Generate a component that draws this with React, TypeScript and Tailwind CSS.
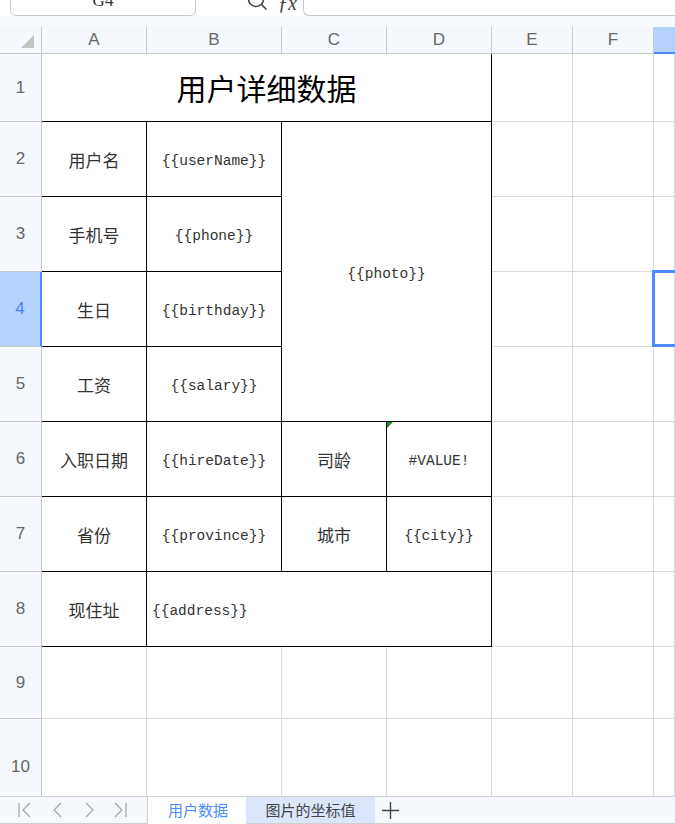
import React from "react";

const colLetters = ["A", "B", "C", "D", "E", "F", "G"];

const gridCell = "border-r border-b border-[#dadada] bg-white";
const tableCell =
  "border-r border-b border-black bg-white flex items-center justify-center";
const label = "font-['Noto_Sans_CJK_SC',sans-serif] text-[17px] text-[#333] mt-[2px]";
const code = "font-['Liberation_Mono',monospace] text-[14.5px] text-[#333] mt-[6px]";

function RowHead({ n, active }: { n: number; active?: boolean }) {
  if (active) {
    return (
      <div className="flex items-center justify-center bg-[#b4d2fd] border-b border-b-[#c9c9c9] border-r-2 border-r-[#4a8cf7] font-['Liberation_Sans',sans-serif] text-[17px] text-[#4a86ee]">
        {n}
      </div>
    );
  }
  return (
    <div className="flex items-center justify-center bg-[#f5f9fe] border-r border-b border-[#c9c9c9] font-['Liberation_Sans',sans-serif] text-[17px] text-[#666]">
      {n}
    </div>
  );
}

function Blank({ selected }: { selected?: boolean }) {
  return (
    <div className={`${gridCell} relative`}>
      {selected && (
        <div className="absolute -left-[2px] -top-[2px] -bottom-[1px] -right-[40px] border-[3px] border-[#4c8dfc]" />
      )}
    </div>
  );
}

function Tail({ row }: { row: number }) {
  return (
    <>
      <Blank />
      <Blank />
      <Blank selected={row === 4} />
    </>
  );
}

export default function App() {
  return (
    <div className="w-[675px] h-[824px] overflow-hidden flex flex-col bg-[#f7fbff]">
      {/* formula bar, mostly scrolled off the top */}
      <div className="h-[16px] flex items-end relative overflow-hidden bg-white">
        <div className="ml-[10px] w-[186px] h-[34px] bg-white border border-[#c8c8c8] rounded-b-md flex items-center justify-center relative">
          <span className="font-['Liberation_Serif',serif] text-[17px] leading-none text-[#333] mt-[2px]">
            G4
          </span>
          <span className="absolute right-[5px] top-[12px] w-0 h-0 border-l-[4px] border-r-[4px] border-t-[5px] border-l-transparent border-r-transparent border-t-[#999]" />
        </div>
        <svg
          className="ml-[50px] mb-[4px]"
          width="24"
          height="24"
          viewBox="0 0 24 24"
          fill="none"
          stroke="#444"
          strokeWidth="1.6"
        >
          <circle cx="10" cy="11" r="7.5" />
          <path d="M6.5 11h7M15.5 16.5l5 5" />
        </svg>
        <span className="ml-[8px] mb-[3px] font-['Liberation_Serif',serif] italic text-[20px] leading-none text-[#444]">
          ƒx
        </span>
        <div className="ml-[6px] flex-1 h-[34px] bg-white border border-[#c8c8c8] border-r-0 rounded-bl-md" />
      </div>
      <div className="h-[11px] bg-[#f7fbff]" />

      {/* sheet */}
      <div className="flex-1 overflow-hidden">
        <div className="grid grid-cols-[42px_105px_135px_105px_105px_81px_81px_1fr] grid-rows-[27px_68px_75px_75px_75px_75px_75px_75px_75px_72px_97px]">
          {/* column header */}
          <div className="relative bg-[#f5f9fe] border-r border-b border-[#c9c9c9]">
            <svg className="absolute right-[7px] bottom-[5px]" width="13" height="13" viewBox="0 0 13 13">
              <path d="M13 0V13H0Z" fill="#c3c3c3" />
            </svg>
          </div>
          {colLetters.map((c) =>
            c === "G" ? (
              <div
                key={c}
                className="flex items-center justify-center bg-[#b4d2fd] border-b-2 border-b-[#4a8cf7]"
              />
            ) : (
              <div
                key={c}
                className="flex items-center justify-center bg-[#f5f9fe] border-r border-b border-[#c9c9c9] font-['Liberation_Sans',sans-serif] text-[17px] text-[#666]"
              >
                {c}
              </div>
            )
          )}

          {/* row 1 */}
          <RowHead n={1} />
          <div className={`${tableCell} col-span-4`}>
            <span className="font-['Noto_Sans_CJK_SC',sans-serif] text-[30px] text-black">
              用户详细数据
            </span>
          </div>
          <Tail row={1} />

          {/* row 2 */}
          <RowHead n={2} />
          <div className={tableCell}>
            <span className={label}>用户名</span>
          </div>
          <div className={tableCell}>
            <span className={code}>{"{{userName}}"}</span>
          </div>
          <div className={`${tableCell} col-span-2 row-span-4`}>
            <span className={code}>{"{{photo}}"}</span>
          </div>
          <Tail row={2} />

          {/* row 3 */}
          <RowHead n={3} />
          <div className={tableCell}>
            <span className={label}>手机号</span>
          </div>
          <div className={tableCell}>
            <span className={code}>{"{{phone}}"}</span>
          </div>
          <Tail row={3} />

          {/* row 4 */}
          <RowHead n={4} active />
          <div className={tableCell}>
            <span className={label}>生日</span>
          </div>
          <div className={tableCell}>
            <span className={code}>{"{{birthday}}"}</span>
          </div>
          <Tail row={4} />

          {/* row 5 */}
          <RowHead n={5} />
          <div className={tableCell}>
            <span className={label}>工资</span>
          </div>
          <div className={tableCell}>
            <span className={code}>{"{{salary}}"}</span>
          </div>
          <Tail row={5} />

          {/* row 6 */}
          <RowHead n={6} />
          <div className={tableCell}>
            <span className={label}>入职日期</span>
          </div>
          <div className={tableCell}>
            <span className={code}>{"{{hireDate}}"}</span>
          </div>
          <div className={tableCell}>
            <span className={label}>司龄</span>
          </div>
          <div className={`${tableCell} relative`}>
            <span className="absolute left-0 top-0 w-0 h-0 border-t-[6px] border-r-[6px] border-t-[#1d8a24] border-r-transparent" />
            <span className={code}>#VALUE!</span>
          </div>
          <Tail row={6} />

          {/* row 7 */}
          <RowHead n={7} />
          <div className={tableCell}>
            <span className={label}>省份</span>
          </div>
          <div className={tableCell}>
            <span className={code}>{"{{province}}"}</span>
          </div>
          <div className={tableCell}>
            <span className={label}>城市</span>
          </div>
          <div className={tableCell}>
            <span className={code}>{"{{city}}"}</span>
          </div>
          <Tail row={7} />

          {/* row 8 */}
          <RowHead n={8} />
          <div className={tableCell}>
            <span className={label}>现住址</span>
          </div>
          <div className={`${tableCell} col-span-3 !justify-start pl-[5px]`}>
            <span className={code}>{"{{address}}"}</span>
          </div>
          <Tail row={8} />

          {/* rows 9-10 */}
          {[9, 10].map((r) => (
            <React.Fragment key={r}>
              <RowHead n={r} />
              <Blank />
              <Blank />
              <Blank />
              <Blank />
              <Blank />
              <Blank />
              <Blank />
            </React.Fragment>
          ))}
        </div>
      </div>

      {/* sheet tabs */}
      <div className="h-[28px] flex bg-[#f5f9fe] border-t border-b border-[#d0d0d0]">
        <div className="w-[148px] flex items-center border-r border-[#d0d0d0] text-[#a8a8a8]">
          <svg className="ml-[18px]" width="14" height="16" viewBox="0 0 14 16" fill="none" stroke="currentColor" strokeWidth="1.3">
            <path d="M1 1v14M12 1 5 8l7 7" />
          </svg>
          <svg className="ml-[20px]" width="10" height="16" viewBox="0 0 10 16" fill="none" stroke="currentColor" strokeWidth="1.3">
            <path d="M9 1 2 8l7 7" />
          </svg>
          <svg className="ml-[23px]" width="10" height="16" viewBox="0 0 10 16" fill="none" stroke="currentColor" strokeWidth="1.3">
            <path d="M1 1l7 7-7 7" />
          </svg>
          <svg className="ml-[18px]" width="14" height="16" viewBox="0 0 14 16" fill="none" stroke="currentColor" strokeWidth="1.3">
            <path d="M2 1l7 7-7 7M13 1v14" />
          </svg>
        </div>
        <div className="w-[98px] -mb-px flex items-center justify-center bg-white font-['Noto_Sans_CJK_SC',sans-serif] text-[15px] text-[#4a8cff]">
          <span className="ml-[2px]">用户数据</span>
        </div>
        <div className="w-[129px] flex items-center justify-center bg-[#dbe6fb] font-['Noto_Sans_CJK_SC',sans-serif] text-[15px] text-[#444]">
          图片的坐标值
        </div>
        <div className="w-[30px] flex items-center justify-center">
          <svg width="17" height="17" viewBox="0 0 17 17" fill="none" stroke="#444" strokeWidth="1.4">
            <path d="M8.5 0v17M0 8.5h17" />
          </svg>
        </div>
      </div>
    </div>
  );
}
